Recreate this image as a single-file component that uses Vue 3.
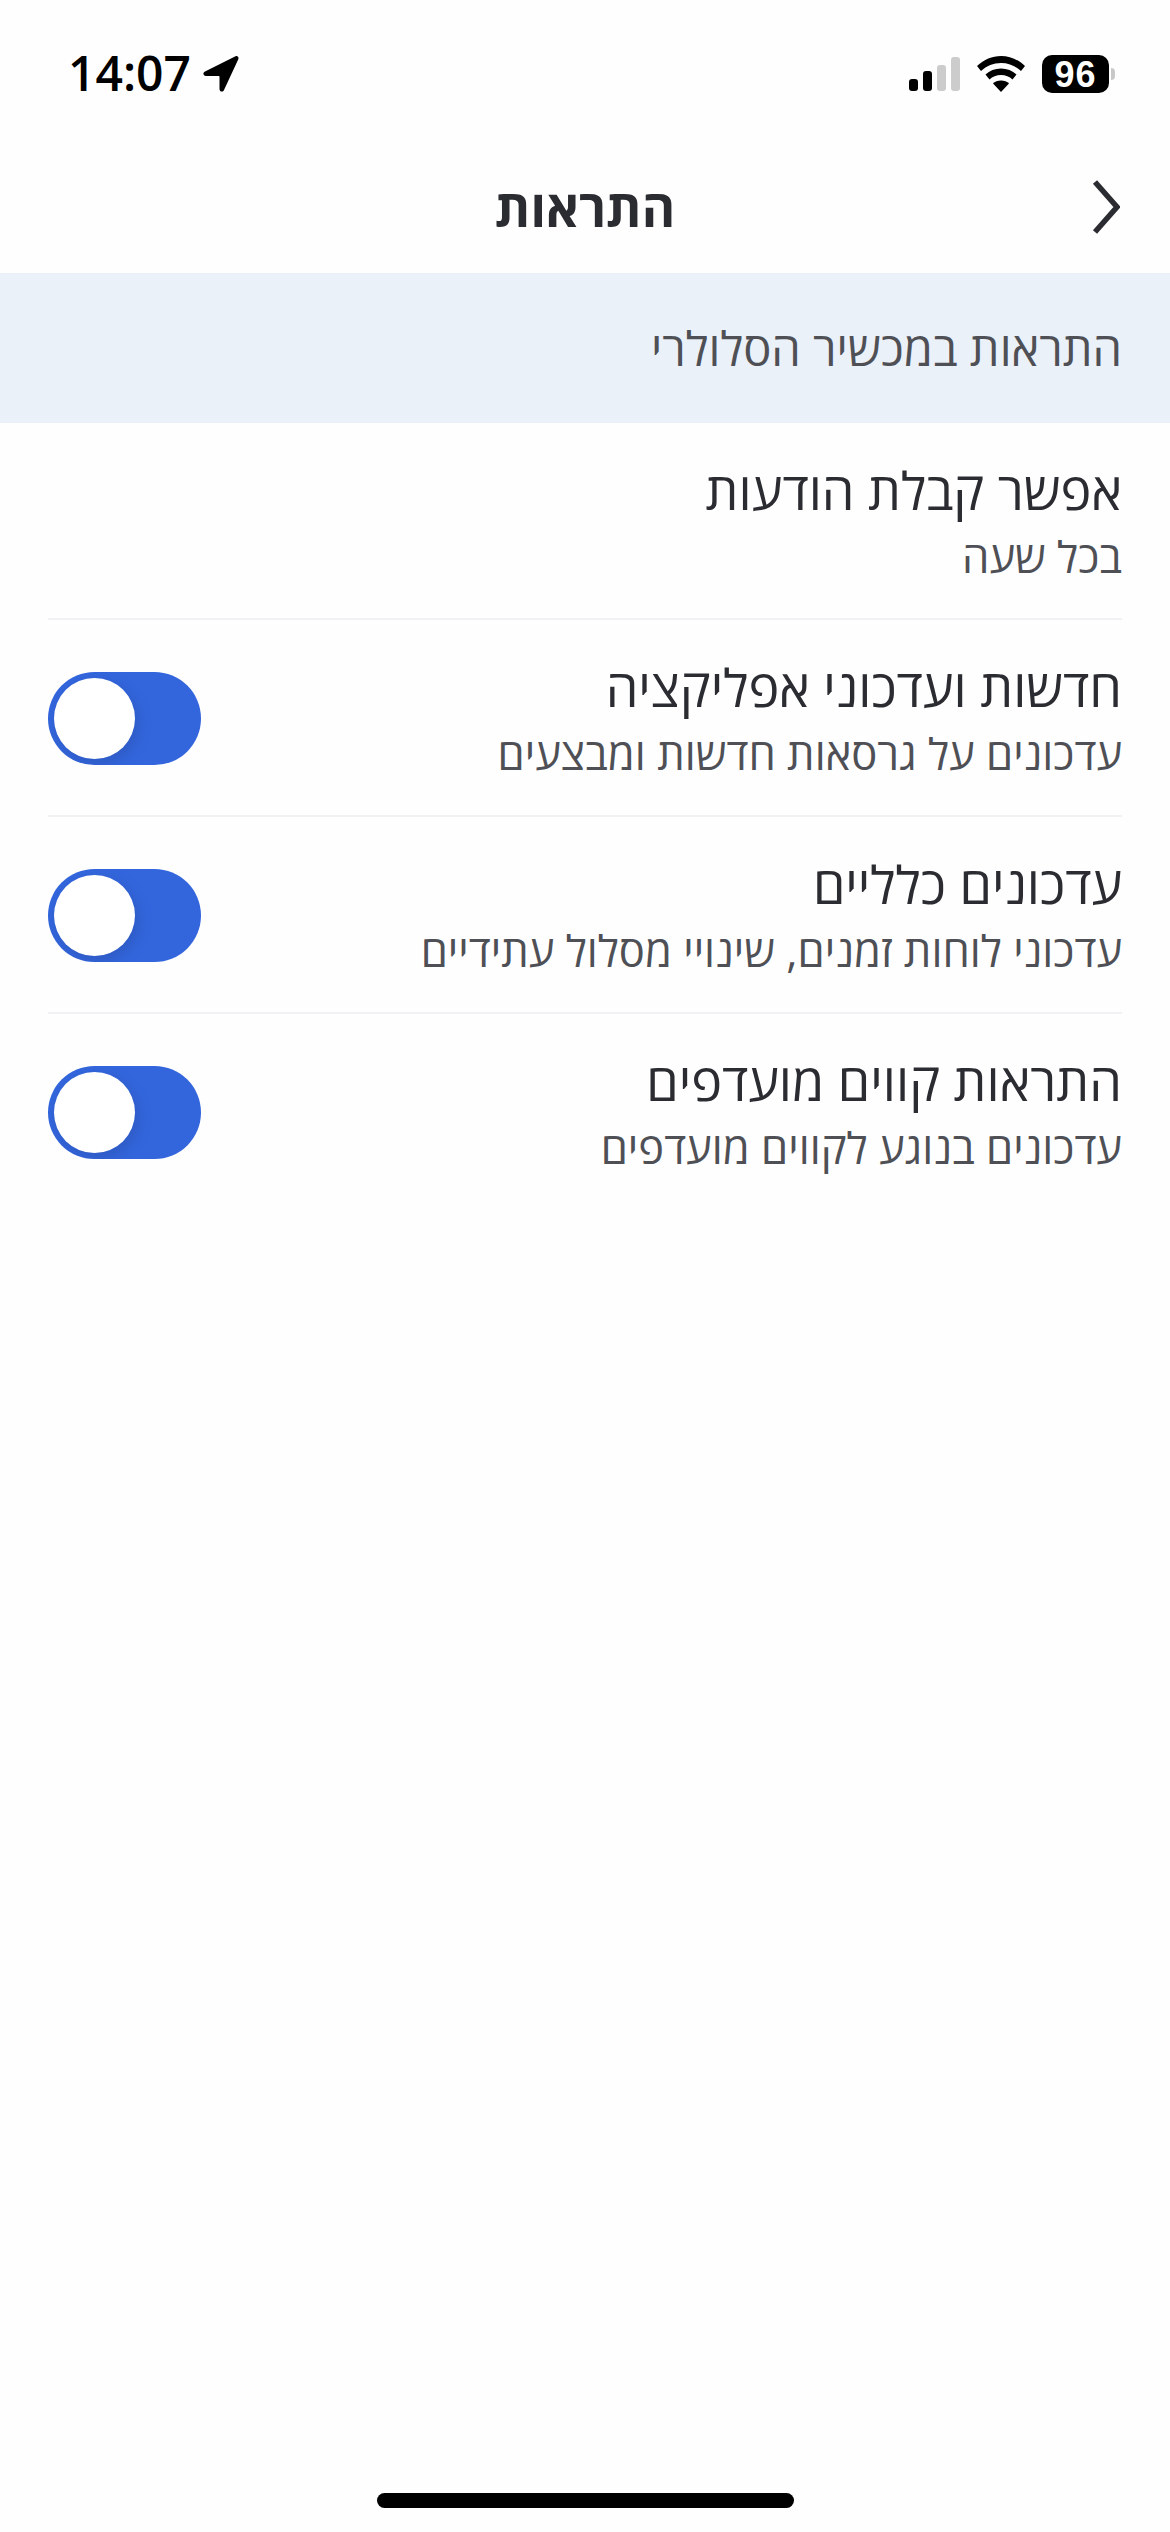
<script setup>
const rows = [
  { title: 'אפשר קבלת הודעות', sub: 'בכל שעה', toggle: false },
  { title: 'חדשות ועדכוני אפליקציה', sub: 'עדכונים על גרסאות חדשות ומבצעים', toggle: true },
  { title: 'עדכונים כלליים', sub: 'עדכוני לוחות זמנים, שינויי מסלול עתידיים', toggle: true },
  { title: 'התראות קווים מועדפים', sub: 'עדכונים בנוגע לקווים מועדפים', toggle: true },
]
</script>

<template>
  <div class="screen">
    <div class="status">
      <div class="status-left">
        <span class="time">14:07</span>
        <svg class="arrow" width="37" height="37" viewBox="0 0 37 37">
          <path d="M33.500 1.200 3 16.400c-2.600 1.300-1.900 4.600 1 4.600h12.500c.6 0 1 .4 1 1v12c0 2.800 3.400 3.600 4.500 1L36.300 4.300c.8-2.200-.8-4-2.800-3.100Z" fill="#000"/>
        </svg>
      </div>
      <div class="status-right">
        <svg class="signal" width="51" height="34" viewBox="0 0 51 34">
          <rect x="0" y="22" width="9" height="12" rx="3" fill="#000"/>
          <rect x="14" y="14" width="9" height="20" rx="3" fill="#000"/>
          <rect x="28" y="8" width="9" height="26" rx="3" fill="#ccc"/>
          <rect x="42" y="0" width="9" height="34" rx="3" fill="#ccc"/>
        </svg>
        <svg class="wifi" width="48" height="36" viewBox="0 0 48 36">
          <path d="M24 0C15 0 7 3.500 0 10l4 5c5.600-5.200 12.400-8 20-8s14.400 2.800 20 8l4-5C41 3.500 33 0 24 0Z" fill="#000"/>
          <path d="M24 12.500c-6 0-11.400 2.200-15.500 6l4 5c3-2.800 7-4.500 11.500-4.500s8.500 1.700 11.500 4.500l4-5c-4.100-3.800-9.500-6-15.500-6Z" fill="#000"/>
          <path d="M24 24.500c-3.300 0-6.200 1.200-8 3L24 36l8-8.500c-1.800-1.800-4.700-3-8-3Z" fill="#000"/>
        </svg>
        <div class="battery">
          <div class="battery-body">96</div>
          <div class="battery-nub"></div>
        </div>
      </div>
    </div>

    <header class="nav">
      <span class="nav-spacer"></span>
      <h1 class="nav-title">התראות</h1>
      <svg class="chevron" width="28" height="54" viewBox="0 0 28 54">
        <path d="M3 2 25 27 3 52" fill="none" stroke="#2b2c32" stroke-width="5.500"/>
      </svg>
    </header>

    <div class="banner">התראות במכשיר הסלולרי</div>

    <ul class="list">
      <li v-for="row in rows" :key="row.title" class="row">
        <div class="row-text">
          <div class="row-title">{{ row.title }}</div>
          <div class="row-sub">{{ row.sub }}</div>
        </div>
        <div v-if="row.toggle" class="toggle"><span class="knob"></span></div>
      </li>
    </ul>

    <div class="spacer"></div>
    <div class="home-wrap"><div class="home"></div></div>
  </div>
</template>

<style>
html, body { margin: 0; background: #fff; }
</style>

<style scoped>
.screen {
  width: 1170px;
  height: 2532px;
  background: #fefefe;
  display: flex;
  flex-direction: column;
  font-family: "Open Sans", "Liberation Sans", sans-serif;
  color: #2b2c32;
  overflow: hidden;
}
.status {
  height: 111px;
  box-sizing: border-box;
  padding: 55px 55px 0 68px;
  display: flex;
  justify-content: space-between;
  align-items: flex-start;
  direction: ltr;
}
.status-left { display: flex; align-items: center; gap: 11px; margin-top: -2px; }
.time { font-size: 48px; font-weight: 600; line-height: 40px; color: #000; }
.status-right { display: flex; align-items: center; gap: 17px; }
.battery { display: flex; align-items: center; gap: 2px; }
.battery-body {
  width: 67px;
  height: 38px;
  border-radius: 10px;
  background: #000;
  color: #fff;
  font-family: "Liberation Sans", sans-serif;
  font-weight: 700;
  font-size: 36px;
  letter-spacing: 1px;
  line-height: 40px;
  text-align: center;
}
.battery-nub { width: 4px; height: 12px; background: #c8c8c8; border-radius: 0 4px 4px 0; }
.nav {
  height: 162px;
  box-sizing: border-box;
  display: flex;
  justify-content: space-between;
  align-items: center;
  padding: 30px 50px 0 50px;
}
.nav-spacer { width: 28px; }
.nav-title { margin: 0; font-size: 51px; font-weight: 700; line-height: 70px; color: #2b2c32; direction: rtl; }
.banner {
  height: 150px;
  background: #ebf1f9;
  direction: rtl;
  display: flex;
  align-items: center;
  padding: 0 48px;
  font-size: 47px;
  color: #4f5056;
}
.list { list-style: none; margin: 0; padding: 0 48px; direction: rtl; }
.row {
  height: 197px;
  box-sizing: border-box;
  padding-top: 2px;
  border-bottom: 2px solid #f0f1f3;
  display: flex;
  justify-content: space-between;
  align-items: center;
}
.row:last-child { border-bottom-color: transparent; }
.row-title { font-size: 52px; line-height: 66px; color: #2b2c32; }
.row-sub { font-size: 43.5px; line-height: 60px; margin-top: 4px; color: #4f5056; }
.toggle {
  width: 153px;
  height: 93px;
  border-radius: 47px;
  background: #3366dd;
  display: flex;
  align-items: center;
  justify-content: flex-end;
  padding: 0 6px;
  box-sizing: border-box;
  direction: ltr;
  flex-direction: row-reverse;
  overflow: hidden;
}
.knob {
  width: 81px;
  height: 81px;
  border-radius: 50%;
  background: #fff;
  box-shadow: 3px 5px 14px rgba(30, 50, 110, 0.25);
}
.spacer { flex: 1; }
.home-wrap { height: 39px; display: flex; justify-content: center; }
.home { width: 417px; height: 15px; border-radius: 8px; background: #000; }
</style>
